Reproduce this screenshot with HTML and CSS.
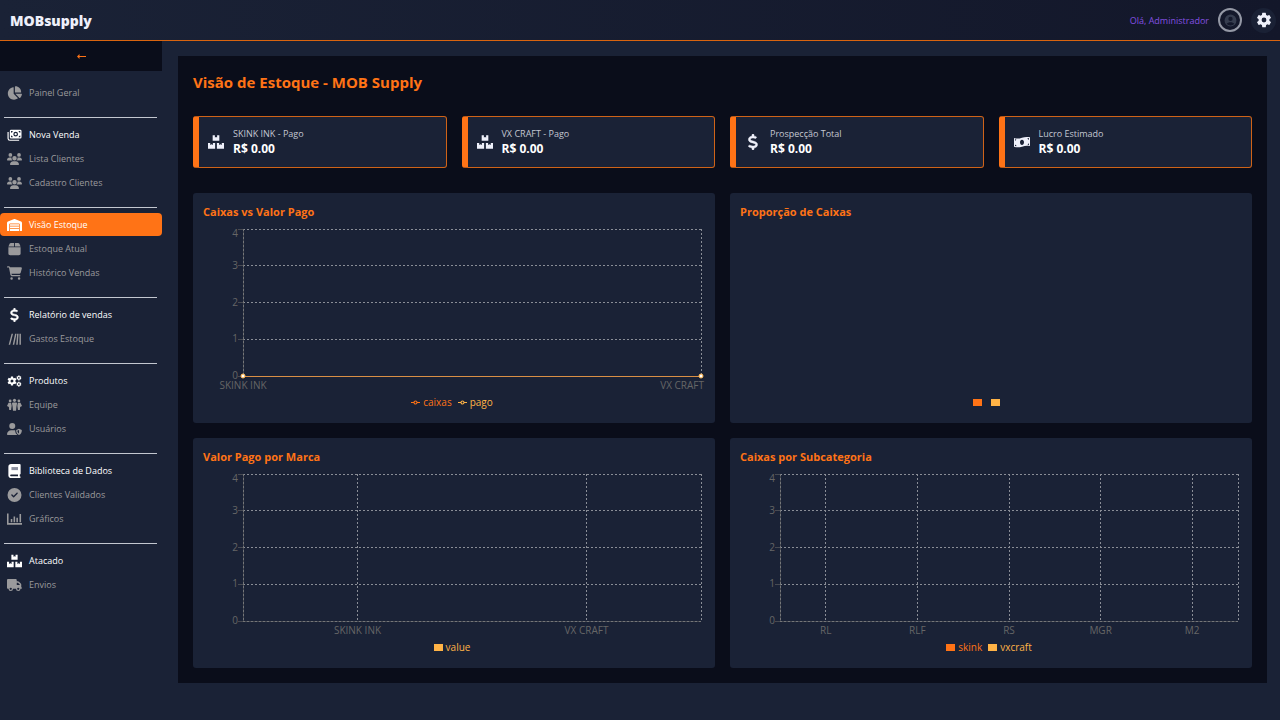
FILE: index.html
```html
<!DOCTYPE html>
<html lang="pt-BR">
<head>
<meta charset="utf-8">
<meta name="viewport" content="width=device-width, initial-scale=1">
<title>MOBsupply - Visão de Estoque</title>
<link rel="stylesheet" href="styles.css">
</head>
<body>
<svg class="sprite" aria-hidden="true">
  <symbol id="i-pie" viewBox="0 0 576 512"><path d="M304 240V16.600c0-9 7-16.600 16-16.600C443.700 0 544 100.300 544 224c0 9-7.600 16-16.600 16H304zM32 272C32 150.700 122.100 50.300 239 34.300c9.200-1.300 17 6.100 17 15.400V288L412.500 444.500c6.700 6.700 6.200 17.700-1.500 23.100C371.800 495.600 323.800 512 272 512 139.500 512 32 404.600 32 272zm526.400 16c9.300 0 16.600 7.800 15.400 17-7.700 55.900-34.600 105.600-73.900 142.300-6 5.600-15.400 5.200-21.200-.7L320 288H558.400z"/></symbol>
  <symbol id="i-bills" viewBox="0 0 24 24"><path fill-rule="evenodd" d="M6 3h16a2 2 0 0 1 2 2v11a2 2 0 0 1-2 2H6a2 2 0 0 1-2-2V5a2 2 0 0 1 2-2zm8 3.500a4 4 0 1 0 0 8 4 4 0 0 0 0-8zM6 5v3a3 3 0 0 0 3-3zm16 0h-3a3 3 0 0 0 3 3zM6 16h3a3 3 0 0 0-3-3zm16 0v-3a3 3 0 0 0-3 3z"/><circle cx="14" cy="10.500" r="2"/><path d="M0 7h2v11a2 2 0 0 0 2 2h16v2H4a4 4 0 0 1-4-4z"/></symbol>
  <symbol id="i-users" viewBox="0 0 640 512"><path d="M144 0a80 80 0 1 1 0 160A80 80 0 1 1 144 0zM512 0a80 80 0 1 1 0 160A80 80 0 1 1 512 0zM0 298.700C0 239.800 47.800 192 106.700 192h42.700c15.900 0 31 3.500 44.600 9.700-1.300 7.200-1.900 14.700-1.900 22.300 0 38.200 16.800 72.500 43.300 96H21.300C9.600 320 0 310.400 0 298.700zM405.300 320h-.7c26.600-23.500 43.300-57.800 43.300-96 0-7.600-.7-15-1.900-22.300 13.600-6.300 28.700-9.700 44.600-9.700h42.700C592.200 192 640 239.800 640 298.700c0 11.800-9.600 21.300-21.300 21.300H405.300zM224 224a96 96 0 1 1 192 0 96 96 0 1 1-192 0zM128 485.300C128 411.700 187.700 352 261.300 352h117.300C452.300 352 512 411.700 512 485.300c0 14.700-11.900 26.700-26.700 26.700H154.700c-14.700 0-26.700-11.900-26.700-26.700z"/></symbol>
  <symbol id="i-warehouse" viewBox="0 0 640 512"><path d="M0 488V171.300c0-26.200 15.900-49.700 40.200-59.400L308.100 4.800c7.600-3.100 16.100-3.100 23.800 0l267.900 107.100c24.300 9.700 40.200 33.300 40.200 59.400V488c0 13.300-10.700 24-24 24h-48c-13.300 0-24-10.700-24-24V224c0-17.700-14.300-32-32-32H128c-17.700 0-32 14.300-32 32v264c0 13.300-10.700 24-24 24H24c-13.300 0-24-10.700-24-24zM128 224h384v64H128zM128 320h384v72H128zM128 424h384v88H128z"/></symbol>
  <symbol id="i-box" viewBox="0 0 448 512"><path d="M50.700 58.500 0 160h208V32H93.700C75.500 32 58.900 42.300 50.700 58.500zM240 160h208L397.300 58.500C389.100 42.300 372.500 32 354.300 32H240v128zM448 192H0v224c0 35.300 28.700 64 64 64h320c35.300 0 64-28.700 64-64V192z"/></symbol>
  <symbol id="i-cart" viewBox="0 0 576 512"><path d="M0 24C0 10.700 10.700 0 24 0h45.500c22 0 41.500 12.800 50.600 32h411c26.300 0 45.500 25 38.600 50.400l-41 152.300c-8.500 31.400-37 53.300-69.500 53.300H170.700l5.400 28.500c2.200 11.300 12.100 19.500 23.600 19.500H488c13.300 0 24 10.700 24 24s-10.700 24-24 24H199.700c-34.600 0-64.300-24.600-70.700-58.500L77.400 54.500c-.7-3.800-4-6.500-7.900-6.500H24C10.700 48 0 37.300 0 24zM128 464a48 48 0 1 1 96 0 48 48 0 1 1-96 0zm336-48a48 48 0 1 1 0 96 48 48 0 1 1 0-96z"/></symbol>
  <symbol id="i-dollar" viewBox="0 0 320 512"><path stroke="currentColor" stroke-width="16" d="M160 0c17.700 0 32 14.300 32 32v35.700c1.600.2 3.100.4 4.700.7.400.1.700.1 1.100.2l48 8.800c17.400 3.200 28.900 19.900 25.700 37.200s-19.900 28.900-37.200 25.700l-47.500-8.700c-31.300-4.600-58.900-1.500-78.300 6.200s-27.200 18.300-29 28.100c-2 10.700-.5 16.700 1.200 20.400 1.800 3.900 5.500 8.300 12.800 13.200 16.300 10.700 41.300 17.700 73.700 26.300l2.900.8c28.600 7.600 63.600 16.800 89.600 33.800 14.200 9.300 27.600 21.900 35.900 39.500 8.500 17.900 10.300 37.900 6.400 59.200-6.900 38-33.100 63.400-65.600 76.700-13.700 5.600-28.600 9.200-44.400 11V480c0 17.700-14.300 32-32 32s-32-14.300-32-32v-34.900c-.4-.1-.9-.1-1.300-.2h-.2c-24.400-3.800-64.500-14.300-91.500-26.300-16.100-7.200-23.400-26.100-16.200-42.200s26.100-23.400 42.200-16.200c20.900 9.300 55.300 18.500 75.200 21.600 31.900 4.700 58.200 2 76-5.300 16.900-6.900 24.600-16.900 26.800-28.900 1.900-10.600.4-16.700-1.300-20.400-1.900-4-5.600-8.400-13-13.300-16.400-10.700-41.500-17.700-74-26.300l-2.800-.7c-28.600-7.600-63.700-16.900-89.700-33.900-14.200-9.300-27.500-22-35.800-39.600-8.400-17.900-10.100-37.900-6.100-59.200C23.700 116 52.300 91.200 84.800 78.300c13.300-5.300 27.900-8.900 43.200-11V32c0-17.700 14.300-32 32-32z"/></symbol>
  <symbol id="i-lines" viewBox="0 0 24 24"><path d="M7 3h2.500L4.500 22H2zM13 3h2.500l-4 19H9zM16.500 3H19l-1.500 19H15zM20.500 3H23v19h-2.500z"/></symbol>
  <symbol id="i-gear" viewBox="0 0 24 24"><path fill-rule="evenodd" d="M19.140 12.940c.04-.3.060-.61.060-.94s-.02-.64-.07-.94l2.030-1.580a.49.490 0 0 0 .12-.61l-1.920-3.320a.49.490 0 0 0-.59-.22l-2.390.96a7 7 0 0 0-1.620-.94l-.36-2.540a.48.480 0 0 0-.48-.41h-3.840a.47.470 0 0 0-.47.410l-.36 2.540c-.59.240-1.130.57-1.620.94l-2.390-.96a.47.470 0 0 0-.59.220L2.740 8.870a.47.470 0 0 0 .12.610l2.030 1.580c-.05.300-.09.630-.09.940s.02.640.07.940l-2.030 1.580a.49.490 0 0 0-.12.610l1.920 3.320c.12.220.37.290.59.220l2.390-.96c.5.380 1.030.7 1.620.94l.36 2.540c.05.240.24.410.48.410h3.840c.24 0 .44-.17.470-.41l.36-2.540a7 7 0 0 0 1.620-.94l2.390.96c.22.080.47 0 .59-.22l1.920-3.320a.47.470 0 0 0-.12-.61zM12 15.200a3.200 3.200 0 1 1 0-6.400 3.200 3.200 0 0 1 0 6.400z"/></symbol>
  <symbol id="i-gears" viewBox="0 0 24 20"><use href="#i-gear" x="-1" y="1" width="18" height="18"/><use href="#i-gear" x="14" y="0" width="10" height="10"/><use href="#i-gear" x="14" y="10" width="10" height="10"/></symbol>
  <symbol id="i-team" viewBox="0 0 24 20"><circle cx="5" cy="3.500" r="2.200"/><circle cx="12" cy="2.500" r="2.500"/><circle cx="19" cy="3.500" r="2.200"/><path d="M2.500 6.500h4L7.500 11l-1 7H3.500L3 13 0 11.500zM9.500 6h5a1.500 1.500 0 0 1 1.500 1.500L15 13l-.5 6h-5L9 13 8 7.500A1.500 1.500 0 0 1 9.500 6zM17.500 6.500h4L24 11.500 21 13l-.5 5h-3l-1-7z"/></symbol>
  <symbol id="i-shield" viewBox="0 0 640 512"><path fill-rule="evenodd" d="M224 256A128 128 0 1 0 224 0a128 128 0 1 0 0 256zM178.300 304C79.800 304 0 383.800 0 482.300 0 498.700 13.300 512 29.700 512h388.600c7 0 13-2 18-6-50-36-85-92-85-174v-21c-17-5-36-7-55-7zM512 250l120 46c6 90-30 178-120 216-90-38-126-126-120-216zm0 52-70 27c4 50 25 93 70 123z"/></symbol>
  <symbol id="i-book" viewBox="0 0 448 512"><path fill-rule="evenodd" d="M96 0C43 0 0 43 0 96v320c0 53 43 96 96 96h320c17.700 0 32-14.300 32-32s-14.300-32-32-32v-64c17.700 0 32-14.300 32-32V32c0-17.700-14.300-32-32-32H96zm0 384h256v64H96c-17.700 0-32-14.300-32-32s14.300-32 32-32z"/><path class="book-page" d="M112 112h240v112H112z"/></symbol>
  <symbol id="i-check" viewBox="0 0 512 512"><path d="M256 512a256 256 0 1 0 0-512 256 256 0 1 0 0 512zM369 209 241 337c-9.400 9.400-24.600 9.400-33.900 0l-64-64c-9.400-9.400-9.400-24.600 0-33.900s24.600-9.400 33.900 0l47 47L335 175c9.400-9.400 24.600-9.400 33.900 0s9.400 24.600 0 33.900z"/></symbol>
  <symbol id="i-chart" viewBox="0 0 24 20"><path d="M0 1h2.500v15.500H24V19H0zM6 10h2.500v5H6zM10.500 6H13v9h-2.500zM15 8h2.500v7H15zM20 2h2.500v13H20z"/></symbol>
  <symbol id="i-boxes" viewBox="0 0 576 512"><path d="M168 16h80v80l40-24 40 24V16h80v192H168zM0 288h80v80l48-30 48 30v-80h80v208H0zM320 288h80v80l48-30 48 30v-80h80v208H320z"/></symbol>
  <symbol id="i-truck" viewBox="0 0 640 512"><path fill-rule="evenodd" d="M48 0C21.500 0 0 21.500 0 48v320c0 26.500 21.500 48 48 48h16a96 96 0 0 0 192 0h128a96 96 0 0 0 192 0h32c17.700 0 32-14.300 32-32s-14.300-32-32-32V237.300c0-17-6.700-33.300-18.700-45.300L512 114.700A64 64 0 0 0 466.700 96H416V48c0-26.500-21.500-48-48-48zm368 160h50.700l77.300 77.300V256H416zM160 368a48 48 0 1 1 0 96 48 48 0 1 1 0-96zm320 0a48 48 0 1 1 0 96 48 48 0 1 1 0-96z"/></symbol>
  <symbol id="i-wave" viewBox="0 0 24 18"><path fill-rule="evenodd" d="M0 3c4 1.500 8 .8 12-.5S20 1 24 2v13c-4-1-8-.3-12 1S4 17.500 0 16zM12 5.500c-1.800 0-3 1.700-3 4s1.200 4 3 4 3-1.700 3-4-1.200-4-3-4zM1.500 5v2A2 2 0 0 0 3.500 5.400zM22.500 13.400v-2a2 2 0 0 0-2 1.800zM1.500 13v2l2 .3a2 2 0 0 0-2-2.300zM22.500 5.500V3.300l-2-.2a2 2 0 0 0 2 2.400z"/></symbol>
  <symbol id="i-account" viewBox="0 0 24 24"><path fill-rule="evenodd" d="M12 1a11 11 0 1 0 0 22 11 11 0 0 0 0-22zm0 4a4 4 0 1 1 0 8 4 4 0 0 1 0-8zm0 10c3 0 6 1 7 3-2 2-4 3-7 3s-5-1-7-3c1-2 4-3 7-3z"/></symbol>
  <symbol id="i-marker" viewBox="0 0 32 32"><path class="marker-line" d="M0 16h10.700a5.300 5.300 0 1 1 10.600 0H32M21.300 16a5.300 5.300 0 1 1-10.600 0"/></symbol>
</svg>

<header class="topbar">
  <span class="brand">MOBsupply</span>
  <div class="session">
    <span class="greeting">Olá, Administrador</span>
    <button class="avatar" type="button" aria-label="Perfil"><svg><use href="#i-account"/></svg></button>
    <button class="settings" type="button" aria-label="Configurações"><svg><use href="#i-gear"/></svg></button>
  </div>
</header>

<div class="shell">
  <aside class="sidebar">
    <button class="collapse" type="button" aria-label="Recolher menu"><svg viewBox="0 0 9 5"><path d="M0 2.500 2.500 0v2H9v1H2.500v2z"/></svg></button>
    <nav class="menu">
      <div class="group">
        <a class="item" href="#"><svg><use href="#i-pie"/></svg>Painel Geral</a>
      </div>
      <div class="group">
        <a class="item lead" href="#"><svg><use href="#i-bills"/></svg>Nova Venda</a>
        <a class="item" href="#"><svg><use href="#i-users"/></svg>Lista Clientes</a>
        <a class="item" href="#"><svg><use href="#i-users"/></svg>Cadastro Clientes</a>
      </div>
      <div class="group">
        <a class="item active" href="#" aria-current="page"><svg><use href="#i-warehouse"/></svg>Visão Estoque</a>
        <a class="item" href="#"><svg><use href="#i-box"/></svg>Estoque Atual</a>
        <a class="item" href="#"><svg><use href="#i-cart"/></svg>Histórico Vendas</a>
      </div>
      <div class="group">
        <a class="item lead" href="#"><svg><use href="#i-dollar"/></svg>Relatório de vendas</a>
        <a class="item" href="#"><svg><use href="#i-lines"/></svg>Gastos Estoque</a>
      </div>
      <div class="group">
        <a class="item lead" href="#"><svg><use href="#i-gears"/></svg>Produtos</a>
        <a class="item" href="#"><svg><use href="#i-team"/></svg>Equipe</a>
        <a class="item" href="#"><svg><use href="#i-shield"/></svg>Usuários</a>
      </div>
      <div class="group">
        <a class="item lead" href="#"><svg><use href="#i-book"/></svg>Biblioteca de Dados</a>
        <a class="item" href="#"><svg><use href="#i-check"/></svg>Clientes Validados</a>
        <a class="item" href="#"><svg><use href="#i-chart"/></svg>Gráficos</a>
      </div>
      <div class="group">
        <a class="item lead" href="#"><svg><use href="#i-boxes"/></svg>Atacado</a>
        <a class="item" href="#"><svg><use href="#i-truck"/></svg>Envios</a>
      </div>
    </nav>
  </aside>

  <main class="content">
    <h1 class="title">Visão de Estoque - MOB Supply</h1>
    <section class="stats">
      <article class="stat"><svg><use href="#i-boxes"/></svg><div><p class="stat-label">SKINK INK - Pago</p><p class="stat-value">R$ 0.00</p></div></article>
      <article class="stat"><svg><use href="#i-boxes"/></svg><div><p class="stat-label">VX CRAFT - Pago</p><p class="stat-value">R$ 0.00</p></div></article>
      <article class="stat"><svg><use href="#i-dollar"/></svg><div><p class="stat-label">Prospecção Total</p><p class="stat-value">R$ 0.00</p></div></article>
      <article class="stat"><svg><use href="#i-wave"/></svg><div><p class="stat-label">Lucro Estimado</p><p class="stat-value">R$ 0.00</p></div></article>
    </section>

    <section class="charts">
      <article class="panel">
        <h2 class="panel-title">Caixas vs Valor Pago</h2>
        <svg class="plot">
          <g class="grid"><line x1="0" x2="100%" y1="0" y2="0"/><line x1="0" x2="100%" y1="25%" y2="25%"/><line x1="0" x2="100%" y1="50%" y2="50%"/><line x1="0" x2="100%" y1="75%" y2="75%"/><line x1="0" x2="0" y1="0" y2="100%"/><line x1="100%" x2="100%" y1="0" y2="100%"/></g>
          <g class="axis"><line x1="0" x2="0" y1="0" y2="100%"/><line x1="-5" x2="0" y1="0" y2="0"/><line x1="-5" x2="0" y1="25%" y2="25%"/><line x1="-5" x2="0" y1="50%" y2="50%"/><line x1="-5" x2="0" y1="75%" y2="75%"/><line x1="-5" x2="0" y1="100%" y2="100%"/></g>
          <g class="ylabels"><text x="-5" y="0" dy="8">4</text><text x="-5" y="25%" dy="3">3</text><text x="-5" y="50%" dy="3">2</text><text x="-5" y="75%" dy="3">1</text><text x="-5" y="100%" dy="3">0</text></g>
          <g class="xlabels"><text x="0" y="100%" dy="13">SKINK INK</text><text class="end" x="100%" y="100%" dx="3" dy="13">VX CRAFT</text></g>
          <line class="series" x1="0" x2="100%" y1="100%" y2="100%"/>
          <circle class="dot" cx="0" cy="100%" r="2"/><circle class="dot" cx="100%" cy="100%" r="2"/>
        </svg>
        <ul class="legend"><li class="orange"><svg class="marker"><use href="#i-marker"/></svg>caixas</li><li class="amber"><svg class="marker"><use href="#i-marker"/></svg>pago</li></ul>
      </article>

      <article class="panel">
        <h2 class="panel-title">Proporção de Caixas</h2>
        <div class="plot"></div>
        <ul class="legend blank"><li class="orange"><i class="swatch"></i></li><li class="amber"><i class="swatch"></i></li></ul>
      </article>

      <article class="panel">
        <h2 class="panel-title">Valor Pago por Marca</h2>
        <svg class="plot">
          <g class="grid"><line x1="0" x2="100%" y1="0" y2="0"/><line x1="0" x2="100%" y1="25%" y2="25%"/><line x1="0" x2="100%" y1="50%" y2="50%"/><line x1="0" x2="100%" y1="75%" y2="75%"/><line x1="0" x2="100%" y1="100%" y2="100%"/><line x1="0" x2="0" y1="0" y2="100%"/><line x1="25%" x2="25%" y1="0" y2="100%"/><line x1="75%" x2="75%" y1="0" y2="100%"/><line x1="100%" x2="100%" y1="0" y2="100%"/></g>
          <g class="axis"><line x1="0" x2="0" y1="0" y2="100%"/><line x1="0" x2="100%" y1="100%" y2="100%"/><line x1="-5" x2="0" y1="0" y2="0"/><line x1="-5" x2="0" y1="25%" y2="25%"/><line x1="-5" x2="0" y1="50%" y2="50%"/><line x1="-5" x2="0" y1="75%" y2="75%"/><line x1="-5" x2="0" y1="100%" y2="100%"/></g>
          <g class="ylabels"><text x="-5" y="0" dy="8">4</text><text x="-5" y="25%" dy="3">3</text><text x="-5" y="50%" dy="3">2</text><text x="-5" y="75%" dy="3">1</text><text x="-5" y="100%" dy="3">0</text></g>
          <g class="xlabels"><text x="25%" y="100%" dy="13">SKINK INK</text><text x="75%" y="100%" dy="13">VX CRAFT</text></g>
        </svg>
        <ul class="legend"><li class="amber"><i class="swatch"></i>value</li></ul>
      </article>

      <article class="panel">
        <h2 class="panel-title">Caixas por Subcategoria</h2>
        <svg class="plot">
          <g class="grid"><line x1="0" x2="100%" y1="0" y2="0"/><line x1="0" x2="100%" y1="25%" y2="25%"/><line x1="0" x2="100%" y1="50%" y2="50%"/><line x1="0" x2="100%" y1="75%" y2="75%"/><line x1="0" x2="100%" y1="100%" y2="100%"/><line x1="0" x2="0" y1="0" y2="100%"/><line x1="10%" x2="10%" y1="0" y2="100%"/><line x1="30%" x2="30%" y1="0" y2="100%"/><line x1="50%" x2="50%" y1="0" y2="100%"/><line x1="70%" x2="70%" y1="0" y2="100%"/><line x1="90%" x2="90%" y1="0" y2="100%"/><line x1="100%" x2="100%" y1="0" y2="100%"/></g>
          <g class="axis"><line x1="0" x2="0" y1="0" y2="100%"/><line x1="0" x2="100%" y1="100%" y2="100%"/><line x1="-5" x2="0" y1="0" y2="0"/><line x1="-5" x2="0" y1="25%" y2="25%"/><line x1="-5" x2="0" y1="50%" y2="50%"/><line x1="-5" x2="0" y1="75%" y2="75%"/><line x1="-5" x2="0" y1="100%" y2="100%"/></g>
          <g class="ylabels"><text x="-5" y="0" dy="8">4</text><text x="-5" y="25%" dy="3">3</text><text x="-5" y="50%" dy="3">2</text><text x="-5" y="75%" dy="3">1</text><text x="-5" y="100%" dy="3">0</text></g>
          <g class="xlabels"><text x="10%" y="100%" dy="13">RL</text><text x="30%" y="100%" dy="13">RLF</text><text x="50%" y="100%" dy="13">RS</text><text x="70%" y="100%" dy="13">MGR</text><text x="90%" y="100%" dy="13">M2</text></g>
        </svg>
        <ul class="legend"><li class="orange"><i class="swatch"></i>skink</li><li class="amber"><i class="swatch"></i>vxcraft</li></ul>
      </article>
    </section>
  </main>
</div>
</body>
</html>
```
FILE: styles.css
```css
:root {
  --bg: #1a2236;
  --dark: #0a0d1a;
  --orange: #ff7316;
  --amber: #ffb346;
  --light: #eef0fa;
  --muted: #9a9a9c;
}
* { box-sizing: border-box; }
body {
  margin: 0;
  min-height: 100vh;
  background: var(--bg);
  color: var(--light);
  font-family: "Open Sans", "Noto Sans", sans-serif;
  font-size: 9px;
}
button { border: 0; padding: 0; background: none; color: inherit; font: inherit; cursor: pointer; }
h1, h2, p, ul { margin: 0; padding: 0; }
svg { fill: currentColor; flex: none; }
.sprite { position: absolute; width: 0; height: 0; }

.topbar {
  display: flex;
  align-items: center;
  justify-content: space-between;
  height: 41px;
  padding: 0 4px 0 10px;
  border-bottom: 1px solid #d9640f;
  background: linear-gradient(90deg, #1a2236, #13172a);
}
.brand { font-size: 14px; font-weight: 800; }
.session { display: flex; align-items: center; gap: 9px; }
.greeting { color: #8350e0; }
.avatar {
  display: grid;
  place-items: center;
  width: 24px;
  height: 24px;
  border: 2px solid #9498a5;
  border-radius: 50%;
  color: #363d4f;
}
.avatar svg { width: 13px; height: 13px; }
.settings { display: grid; place-items: center; width: 25px; height: 25px; border-radius: 50%; background: #1a2135; }
.settings svg { width: 18px; height: 18px; }

.shell { display: flex; align-items: flex-start; }
.sidebar { flex: none; width: 162px; }
.collapse { display: grid; place-items: center; width: 100%; height: 30px; background: var(--dark); color: var(--orange); }
.collapse svg { width: 9px; height: 5px; }
.menu { padding-top: 5px; }
.group { display: flex; flex-direction: column; gap: 1px; padding: 5px 0 13px; }
.group + .group { border-top: 1px solid transparent; border-image: linear-gradient(90deg, transparent 5px, #c3c7d0 5px, #c3c7d0 156px, transparent 156px) 1; }
.item {
  display: flex;
  align-items: center;
  gap: 7px;
  height: 23px;
  padding-left: 7px;
  border-radius: 4px;
  color: var(--muted);
  text-decoration: none;
}
.item svg { width: 15px; height: 14px; }
.lead { color: #fff; font-weight: 500; }
.active { background: var(--orange); color: #fff; }
.book-page { fill: #8c90a0; }

.content { flex: 1; min-width: 0; margin: 15px 13px 37px 16px; padding: 15px; background: var(--dark); }
.title { font-size: 15px; line-height: 22px; font-weight: 700; color: var(--orange); }
.stats { display: grid; grid-template-columns: repeat(4, 1fr); gap: 15px; margin: 23px 0 25px; }
.stat {
  display: flex;
  align-items: center;
  gap: 9px;
  height: 52px;
  padding: 0 9px 1px;
  border: 1px solid #cf6318;
  border-left: 6px solid var(--orange);
  border-radius: 3px;
  background: var(--bg);
}
.stat svg { width: 16px; height: 16px; }
.stat-label { line-height: 14px; color: #c4c7d2; }
.stat-value { font-size: 12px; line-height: 16px; font-weight: 700; color: #fff; }

.charts { display: grid; grid-template-columns: repeat(2, 1fr); gap: 15px; }
.panel { min-width: 0; height: 230px; padding: 10px 14px 10px 10px; border-radius: 3px; background: var(--bg); }
.panel-title { font-size: 11px; line-height: 18px; font-weight: 700; color: var(--orange); }
.plot { display: block; width: calc(100% - 40px); height: 147px; margin: 8px 0 0 40px; overflow: visible; }
.grid line { stroke: #8a8e97; stroke-dasharray: 2 2; shape-rendering: crispEdges; }
.axis line { stroke: #666; stroke-opacity: 0.6; shape-rendering: crispEdges; }
.plot text { fill: #666; font-size: 10px; text-anchor: middle; }
.plot .ylabels text, .plot .end { text-anchor: end; }
.series { stroke: #d98f45; stroke-width: 1; shape-rendering: crispEdges; }
.dot { fill: #fff; stroke: var(--amber); stroke-width: 1; }
.legend { display: flex; justify-content: center; gap: 6px; margin-top: 19px; list-style: none; font-size: 10px; line-height: 14px; }
.legend li { display: flex; align-items: center; gap: 3px; }
.blank { gap: 9px; padding-right: 6px; }
.blank li { height: 14px; }
.orange { color: var(--orange); }
.amber { color: var(--amber); }
.swatch { width: 9px; height: 7px; background: currentColor; }
.marker { width: 9px; height: 9px; }
.marker-line { fill: none; stroke: currentColor; stroke-width: 4; }
```
